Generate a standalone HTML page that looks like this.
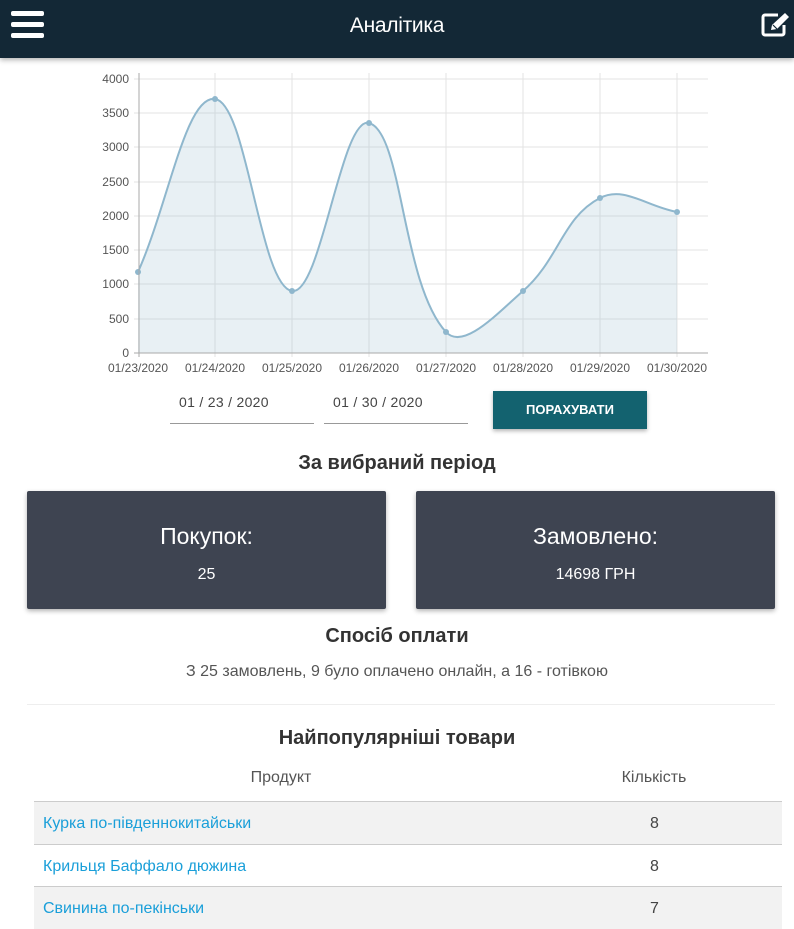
<!DOCTYPE html>
<html><head><meta charset="utf-8"><style>
*{margin:0;padding:0;box-sizing:border-box}
body{width:794px;height:923px;overflow:hidden;background:#fff;font-family:"Liberation Sans",Arial,sans-serif;color:#333;position:relative}
.hdr{position:absolute;left:0;top:0;width:794px;height:58px;background:#132836;box-shadow:0 2px 5px rgba(0,0,0,.3)}
.hdr .t{position:absolute;left:0;right:0;top:14px;text-align:center;color:#fff;font-size:21px;letter-spacing:-0.3px}
.burger{position:absolute;left:11px;width:33px;height:5px;background:#fff;border-radius:2px}
.in{position:absolute;top:391px;height:33px;border-bottom:1px solid #999;font-size:14px;color:#444;padding-left:9px;padding-top:3px;letter-spacing:0.3px}
.btn{position:absolute;left:493px;top:391px;width:154px;height:38px;background:#13626f;color:#fff;font-size:13px;font-weight:bold;text-align:center;line-height:38px;box-shadow:0 2px 4px rgba(0,0,0,.3)}
h2{position:absolute;left:0;right:0;text-align:center;font-size:20px;font-weight:bold;color:#333}
.card{position:absolute;top:491px;width:359px;height:118px;background:#3e4451;color:#fff;text-align:center;box-shadow:0 2px 5px rgba(0,0,0,.3);border-radius:2px}
.card .a{position:absolute;left:0;right:0;top:32px;font-size:23px}
.card .b{position:absolute;left:0;right:0;top:75px;font-size:16px}
.row{position:absolute;left:34px;width:748px;height:43px;border-top:1px solid #ccc;font-size:16px}
.row .n{position:absolute;left:9px;top:13px;color:#1a9fd9}
.row .q{position:absolute;left:600px;width:43px;text-align:center;top:13px;color:#444}
</style></head><body>
<div class="hdr">
<div class="burger" style="top:11px"></div><div class="burger" style="top:22px"></div><div class="burger" style="top:33px"></div>
<div class="t">Аналітика</div>
<svg style="position:absolute;left:760px;top:12px" width="32" height="26" viewBox="0 0 32 26"><path d="M18 3H5a2 2 0 0 0-2 2v16a2 2 0 0 0 2 2h17a2 2 0 0 0 2-2v-8" fill="none" stroke="#fff" stroke-width="3"/><path d="M11 18l1-5L25 1l4 4-12 12z" fill="#fff"/><path d="M13 13l4 4" stroke="#132836" stroke-width="1.2"/></svg>
</div>
<svg style="position:absolute;left:0;top:58px" width="794" height="330" viewBox="0 58 794 330" font-family="Liberation Sans,Arial,sans-serif" font-size="12" fill="#555">
<g stroke="#e3e3e3" stroke-width="1">
<line x1="134" y1="79" x2="708" y2="79"/><line x1="134" y1="113" x2="708" y2="113"/><line x1="134" y1="147" x2="708" y2="147"/><line x1="134" y1="182" x2="708" y2="182"/><line x1="134" y1="216" x2="708" y2="216"/><line x1="134" y1="250" x2="708" y2="250"/><line x1="134" y1="284" x2="708" y2="284"/><line x1="134" y1="319" x2="708" y2="319"/>
<line x1="215" y1="73" x2="215" y2="357"/><line x1="292" y1="73" x2="292" y2="357"/><line x1="369" y1="73" x2="369" y2="357"/><line x1="446" y1="73" x2="446" y2="357"/><line x1="523" y1="73" x2="523" y2="357"/><line x1="600" y1="73" x2="600" y2="357"/><line x1="677" y1="73" x2="677" y2="357"/>
</g>
<path d="M138 272C168.8 202.8 185.6 95.4 215 99C247.2 103 259.5 285.9 292 291C321.1 295.5 341.1 115.6 369 123C402.7 132 401.6 283.6 446 332C463.2 350.8 497.3 313.4 523 291C558.9 259.8 562.6 217.2 600 198C624.2 185.6 646.2 206.4 677 212L677 353L138 353Z" fill="rgba(150,185,205,0.22)"/>
<path d="M138 272C168.8 202.8 185.6 95.4 215 99C247.2 103 259.5 285.9 292 291C321.1 295.5 341.1 115.6 369 123C402.7 132 401.6 283.6 446 332C463.2 350.8 497.3 313.4 523 291C558.9 259.8 562.6 217.2 600 198C624.2 185.6 646.2 206.4 677 212" fill="none" stroke="#8fb7cd" stroke-width="2"/>
<g fill="#8fb7cd"><circle cx="138" cy="272" r="3"/><circle cx="215" cy="99" r="3"/><circle cx="292" cy="291" r="3"/><circle cx="369" cy="123" r="3"/><circle cx="446" cy="332" r="3"/><circle cx="523" cy="291" r="3"/><circle cx="600" cy="198" r="3"/><circle cx="677" cy="212" r="3"/></g>
<line x1="139" y1="73" x2="139" y2="357" stroke="#aaa"/><line x1="134" y1="353" x2="708" y2="353" stroke="#aaa"/>
<g text-anchor="end"><text x="129" y="83">4000</text><text x="129" y="117">3500</text><text x="129" y="151">3000</text><text x="129" y="186">2500</text><text x="129" y="220">2000</text><text x="129" y="254">1500</text><text x="129" y="288">1000</text><text x="129" y="323">500</text><text x="129" y="357">0</text></g>
<g text-anchor="middle"><text x="138" y="372">01/23/2020</text><text x="215" y="372">01/24/2020</text><text x="292" y="372">01/25/2020</text><text x="369" y="372">01/26/2020</text><text x="446" y="372">01/27/2020</text><text x="523" y="372">01/28/2020</text><text x="600" y="372">01/29/2020</text><text x="677" y="372">01/30/2020</text></g>
</svg>
<div class="in" style="left:170px;width:144px">01 / 23 / 2020</div>
<div class="in" style="left:324px;width:144px">01 / 30 / 2020</div>
<div class="btn">ПОРАХУВАТИ</div>
<h2 style="top:452px">За вибраний період</h2>
<div class="card" style="left:27px"><div class="a">Покупок:</div><div class="b">25</div></div>
<div class="card" style="left:416px"><div class="a">Замовлено:</div><div class="b">14698 ГРН</div></div>
<h2 style="top:625px">Спосіб оплати</h2>
<div style="position:absolute;left:0;right:0;top:663px;text-align:center;font-size:16px;color:#555">З 25 замовлень, 9 було оплачено онлайн, а 16 - готівкою</div>
<div style="position:absolute;left:27px;width:748px;top:704px;border-top:1px solid #eee"></div>
<h2 style="top:727px">Найпопулярніші товари</h2>
<div style="position:absolute;left:34px;width:494px;top:769px;text-align:center;font-size:16px;color:#555">Продукт</div>
<div style="position:absolute;left:604px;width:100px;top:769px;text-align:center;font-size:16px;color:#555">Кількість</div>
<div class="row" style="top:801px;background:#f2f2f2"><span class="n">Курка по-південнокитайськи</span><span class="q" style="left:599px">8</span></div>
<div class="row" style="top:844px"><span class="n">Крильця Баффало дюжина</span><span class="q" style="left:599px">8</span></div>
<div class="row" style="top:886px;background:#f2f2f2"><span class="n">Свинина по-пекінськи</span><span class="q" style="left:599px">7</span></div>
</body></html>
